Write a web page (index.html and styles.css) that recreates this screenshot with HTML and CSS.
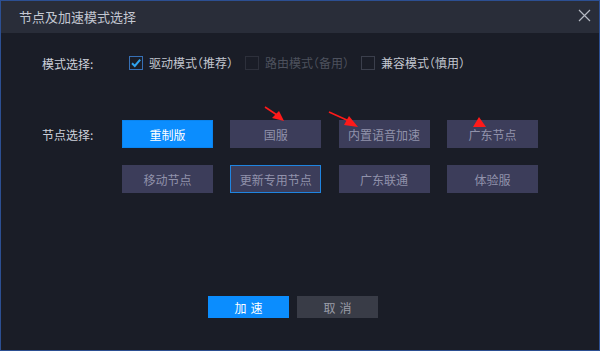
FILE: index.html
```html
<!DOCTYPE html>
<html lang="zh-CN">
<head>
<meta charset="utf-8">
<link rel="stylesheet" href="styles.css">
</head>
<body>
<div class="window">
  <div class="titlebar">
    <span class="title">节点及加速模式选择</span>
    <svg class="close" width="13" height="13" viewBox="0 0 13 13"><path d="M1 1L12 12M12 1L1 12" stroke="#b4b8c2" stroke-width="1.2" fill="none"/></svg>
  </div>
  <div class="content">
    <div class="mode-row">
      <span class="label">模式选择:</span>
      <div class="options">
        <div class="option">
          <span class="box checked"><svg width="12" height="12" viewBox="0 0 12 12"><path d="M2 6.2L4.8 9L10.2 2.6" stroke="#2fa4f0" stroke-width="2" fill="none"/></svg></span>
          <span class="opt-text">驱动模式（推荐）</span>
        </div>
        <div class="option disabled">
          <span class="box"></span>
          <span class="opt-text">路由模式（备用）</span>
        </div>
        <div class="option">
          <span class="box"></span>
          <span class="opt-text">兼容模式（慎用）</span>
        </div>
      </div>
    </div>
    <div class="node-row">
      <span class="label node-label">节点选择:</span>
      <div class="grid">
        <button class="node selected">重制版</button>
        <button class="node">国服</button>
        <button class="node">内置语音加速</button>
        <button class="node">广东节点</button>
        <button class="node">移动节点</button>
        <button class="node focused">更新专用节点</button>
        <button class="node">广东联通</button>
        <button class="node">体验服</button>
      </div>
    </div>
    <div class="footer">
      <button class="btn primary">加速</button>
      <button class="btn cancel">取消</button>
    </div>
  </div>
  <svg class="arrows" width="600" height="351" viewBox="0 0 600 351">
    <g fill="#ff1a1a" stroke="#ff1a1a">
      <line x1="265" y1="107" x2="277" y2="115" stroke-width="1.6"/>
      <polygon points="284,121 272,118 279,111" stroke="none"/>
      <line x1="329" y1="112" x2="349" y2="121" stroke-width="1.6"/>
      <polygon points="358,127 344,125 349,116" stroke="none"/>
      <polygon points="479,117 473,127 486,127" stroke="none"/>
    </g>
  </svg>
</div>
</body>
</html>
```
FILE: styles.css
```css
html, body {
  margin: 0;
  padding: 0;
  background: #1a1d27;
}
body {
  font-family: "Noto Sans CJK SC", "Noto Sans", sans-serif;
  font-size: 12px;
}
.window {
  position: relative;
  width: 600px;
  height: 351px;
  box-sizing: border-box;
  border: 1px solid #2c4f92;
  background: #1a1d27;
  display: flex;
  flex-direction: column;
}
.titlebar {
  height: 32px;
  background: #292d39;
  display: flex;
  align-items: center;
  justify-content: space-between;
  padding: 0 8px 0 18px;
  flex-shrink: 0;
}
.title {
  color: #c3c7d1;
  font-size: 13px;
  line-height: 16px;
}
.close {
  margin-top: -3px;
}
.content {
  display: flex;
  flex-direction: column;
  padding-left: 41px;
}
.label {
  color: #cdd1da;
  font-size: 12px;
  width: 80px;
  flex-shrink: 0;
}
.mode-row {
  display: flex;
  align-items: center;
  margin-top: 20px;
  height: 20px;
}
.options {
  display: flex;
  align-items: center;
  gap: 12px;
  margin-left: 7px;
}
.option {
  display: flex;
  align-items: center;
  gap: 6px;
  color: #c2c6cf;
}
.opt-text {
  font-feature-settings: "halt";
  line-height: 16px;
}
.option.disabled {
  color: #4d515d;
}
.box {
  width: 14px;
  height: 14px;
  box-sizing: border-box;
  border: 1px solid #3b3f4c;
  display: flex;
  align-items: center;
  justify-content: center;
}
.box.checked {
  border-color: #3770b5;
}
.option.disabled .box {
  border-color: #2d303b;
}
.node-row {
  display: flex;
  align-items: flex-start;
  margin-top: 47px;
}
.node-label {
  margin-top: 6px;
}
.grid {
  display: grid;
  grid-template-columns: repeat(4, 91px);
  column-gap: 17.3px;
  row-gap: 17px;
}
.node {
  height: 28px;
  border: 1px solid transparent;
  background: #3c3d5a;
  color: #9192ab;
  font-family: inherit;
  font-size: 12px;
  padding: 0;
  margin: 0;
}
.node.selected {
  background: #0b8dfe;
  color: #ffffff;
  border-color: #0a84ee;
}
.node.focused {
  border-color: #1f84e0;
}
.footer {
  display: flex;
  gap: 8px;
  margin-top: 103px;
  margin-left: 166px;
}
.btn {
  width: 81px;
  height: 22px;
  border: none;
  padding: 0;
  margin: 0;
  font-family: inherit;
  font-size: 12px;
  letter-spacing: 4px;
  text-indent: 4px;
}
.btn.primary {
  background: #0b8dfe;
  color: #ffffff;
}
.btn.cancel {
  background: #393c47;
  color: #9a9da8;
}
.arrows {
  position: absolute;
  left: -1px;
  top: -1px;
  pointer-events: none;
}
```
